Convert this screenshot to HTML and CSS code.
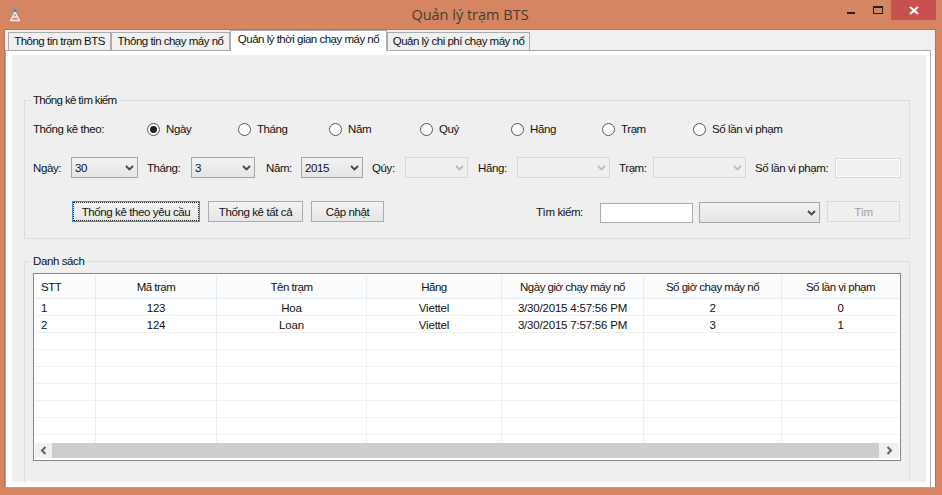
FILE: index.html
```html
<!DOCTYPE html>
<html lang="vi">
<head>
    <meta charset="UTF-8">
    <title>Quản lý trạm BTS</title>
    <link rel="stylesheet" href="styles.css">
</head>
<body>
    <div class="titlebar">
        <svg class="app-icon" width="14" height="16" viewBox="0 0 14 16">
            <circle cx="7" cy="5" r="3.5" fill="none" stroke="#8f97ad" stroke-width="1.4"/>
            <circle cx="7" cy="5" r="1.5" fill="#6d7690"/>
            <path d="M7 6 L3 14 M7 6 L11 14 M4.5 11 H9.5 M2 14.5 H12" fill="none" stroke="#eee" stroke-width="1.4"/>
        </svg>
        <div class="title">Quản lý trạm BTS</div>
        <div class="win-buttons">
            <span class="win-min"></span>
            <span class="win-max"></span>
            <span class="win-close">
                <svg width="10" height="9" viewBox="0 0 10 9"><path d="M1 1 L9 8 M9 1 L1 8" stroke="#fff" stroke-width="2"/></svg>
            </span>
        </div>
    </div>

    <div class="form">
        <div class="tabs">
            <div class="tab tab-1">Thông tin trạm BTS</div>
            <div class="tab tab-2">Thông tin chạy máy nổ</div>
            <div class="tab tab-3 active">Quản lý thời gian chạy máy nổ</div>
            <div class="tab tab-4">Quản lý chi phí chạy máy nổ</div>
        </div>
        <div class="tab-page">
            <div class="panel">
                <fieldset class="group group-search">
                    <legend>Thống kê tìm kiếm</legend>
                    <div class="radio-row">
                        <span class="radio-title">Thống kê theo:</span>
                        <label class="radio"><span class="dot checked"></span>Ngày</label>
                        <label class="radio"><span class="dot"></span>Tháng</label>
                        <label class="radio"><span class="dot"></span>Năm</label>
                        <label class="radio"><span class="dot"></span>Quý</label>
                        <label class="radio"><span class="dot"></span>Hãng</label>
                        <label class="radio"><span class="dot"></span>Trạm</label>
                        <label class="radio"><span class="dot"></span>Số lần vi phạm</label>
                    </div>

                    <div class="field-row">
                        <div class="field f-ngay"><span>Ngày:</span>
                            <div class="combo w67">30<svg class="chev" width="9" height="6" viewBox="0 0 9 6"><path d="M1 1 L4.5 4.5 L8 1" /></svg></div>
                        </div>
                        <div class="field f-thang"><span>Tháng:</span>
                            <div class="combo w64">3<svg class="chev" width="9" height="6" viewBox="0 0 9 6"><path d="M1 1 L4.5 4.5 L8 1" /></svg></div>
                        </div>
                        <div class="field f-nam"><span>Năm:</span>
                            <div class="combo w62">2015<svg class="chev" width="9" height="6" viewBox="0 0 9 6"><path d="M1 1 L4.5 4.5 L8 1" /></svg></div>
                        </div>
                        <div class="field f-quy"><span>Qúy:</span>
                            <div class="combo off w63"><svg class="chev" width="9" height="6" viewBox="0 0 9 6"><path d="M1 1 L4.5 4.5 L8 1" /></svg></div>
                        </div>
                        <div class="field f-hang"><span>Hãng:</span>
                            <div class="combo off w93"><svg class="chev" width="9" height="6" viewBox="0 0 9 6"><path d="M1 1 L4.5 4.5 L8 1" /></svg></div>
                        </div>
                        <div class="field f-tram"><span>Trạm:</span>
                            <div class="combo off w93"><svg class="chev" width="9" height="6" viewBox="0 0 9 6"><path d="M1 1 L4.5 4.5 L8 1" /></svg></div>
                        </div>
                        <div class="field f-solan"><span>Số lần vi phạm:</span>
                            <div class="textbox off"></div>
                        </div>
                    </div>

                    <div class="action-row">
                        <button class="btn btn-focus">Thống kê theo yêu cầu</button>
                        <button class="btn btn-all">Thống kê tất cả</button>
                        <button class="btn btn-update">Cập nhật</button>
                        <span class="search-label">Tìm kiếm:</span>
                        <div class="textbox search-box"></div>
                        <div class="combo search-combo"><svg class="chev" width="9" height="6" viewBox="0 0 9 6"><path d="M1 1 L4.5 4.5 L8 1" /></svg></div>
                        <button class="btn btn-find" disabled>Tìm</button>
                    </div>
                </fieldset>

                <fieldset class="group group-list">
                    <legend>Danh sách</legend>
                    <div class="grid">
                        <div class="grid-body">
                            <table>
                                <colgroup>
                                    <col class="c1"><col class="c2"><col class="c3"><col class="c4"><col class="c5"><col class="c6"><col class="c7">
                                </colgroup>
                                <thead>
                                    <tr>
                                        <th class="left">STT</th>
                                        <th>Mã trạm</th>
                                        <th>Tên trạm</th>
                                        <th>Hãng</th>
                                        <th>Ngày giờ chạy máy nổ</th>
                                        <th>Số giờ chạy máy nổ</th>
                                        <th>Số lần vi phạm</th>
                                    </tr>
                                </thead>
                                <tbody>
                                    <tr><td class="left">1</td><td>123</td><td>Hoa</td><td>Viettel</td><td>3/30/2015 4:57:56 PM</td><td>2</td><td>0</td></tr>
                                    <tr><td class="left">2</td><td>124</td><td>Loan</td><td>Viettel</td><td>3/30/2015 7:57:56 PM</td><td>3</td><td>1</td></tr>
                                    <tr><td></td><td></td><td></td><td></td><td></td><td></td><td></td></tr>
                                    <tr><td></td><td></td><td></td><td></td><td></td><td></td><td></td></tr>
                                    <tr><td></td><td></td><td></td><td></td><td></td><td></td><td></td></tr>
                                    <tr><td></td><td></td><td></td><td></td><td></td><td></td><td></td></tr>
                                    <tr><td></td><td></td><td></td><td></td><td></td><td></td><td></td></tr>
                                    <tr><td></td><td></td><td></td><td></td><td></td><td></td><td></td></tr>
                                    <tr><td></td><td></td><td></td><td></td><td></td><td></td><td></td></tr>
                                </tbody>
                            </table>
                        </div>
                        <div class="hscroll">
                            <span class="arrow"><svg width="7" height="9" viewBox="0 0 7 9"><path d="M5.5 1 L2 4.5 L5.5 8" /></svg></span>
                            <span class="thumb"></span>
                            <span class="arrow arrow-right"><svg width="7" height="9" viewBox="0 0 7 9"><path d="M1.5 1 L5 4.5 L1.5 8" /></svg></span>
                        </div>
                    </div>
                </fieldset>
            </div>
        </div>
    </div>
</body>
</html>
```

FILE: styles.css
```css
* { box-sizing: border-box; }

html, body {
    margin: 0;
    height: 495px;
    overflow: hidden;
}
body {
    background: #d58562;
    color: #111;
    font-family: "Liberation Sans", Arial, sans-serif;
    font-size: 11.5px;
    letter-spacing: -0.4px;
    padding: 0 6px 7px 4px;
    display: flex;
    flex-direction: column;
}

/* title bar */
.titlebar {
    height: 29px;
    flex: none;
    display: grid;
    grid-template-columns: 1fr auto 1fr;
}
.app-icon { margin: 6px 0 0 4px; }
.title {
    font-family: "Open Sans", sans-serif;
    font-size: 14.5px;
    letter-spacing: 0;
    color: #4a3a32;
    padding-top: 5px;
}
.win-buttons {
    display: flex;
    justify-content: flex-end;
    align-items: flex-start;
}
.win-min {
    width: 8px;
    height: 2px;
    margin: 12px 18px 0 0;
    background: #222;
}
.win-max {
    width: 10px;
    height: 8px;
    margin: 6px 8px 0 0;
    border: 1px solid #222;
    border-top-width: 2px;
}
.win-close {
    width: 45px;
    height: 20px;
    background: #c75050;
    display: flex;
    align-items: center;
    justify-content: center;
}

/* window body */
.form {
    flex: 1;
    border: 1px solid #b5735a;
    border-bottom: 1px solid #a8a8a8;
    padding: 0 4px 0 0;
    background: linear-gradient(#f0f0f0 20px, #fff 20px);
    display: flex;
    flex-direction: column;
    min-height: 0;
}

.tabs {
    height: 20px;
    flex: none;
    display: flex;
    align-items: flex-end;
    padding-left: 3px;
    position: relative;
    z-index: 1;
}
.tab {
    height: 19px;
    background: #f0f0f0;
    border: 1px solid #acacac;
    line-height: 17px;
    letter-spacing: -0.5px;
    text-align: center;
    white-space: nowrap;
    margin-bottom: -1px;
}
.tab-1 { width: 103px; }
.tab-2 { width: 119px; }
.tab-3 { width: 157px; }
.tab-4 { width: 143px; }
.tab.active {
    height: 21px;
    background: #fff;
    border-bottom: 0;
    line-height: 17px;
}

.tab-page {
    flex: 1;
    min-height: 0;
    background: #fff;
    border: 1px solid #acacac;
    border-bottom: 0;
    padding: 4px 4px 5px 6px;
}
.panel {
    height: 100%;
    background: #efefef;
    padding: 38px 16px 0 12px;
    overflow: hidden;
}

/* group boxes */
.group {
    margin: 0;
    min-width: 0;
    border: 1px solid #dddddd;
    padding: 0;
}
.group legend {
    margin-left: -2px;
    padding: 0 2px;
    line-height: 14px;
}
.group-search legend { letter-spacing: -0.65px; }
.group-search {
    height: 146px;
    padding: 0 8px;
}
.group-list {
    margin-top: 15px;
    height: 300px;
    padding: 5px 8px 0;
}

/* radios */
.radio-row {
    display: flex;
    align-items: center;
    height: 18px;
    margin-top: 13px;
}
.radio-title { width: 114px; }
.radio {
    width: 91px;
    display: flex;
    align-items: center;
    gap: 6px;
    white-space: nowrap;
}
.dot {
    flex: none;
    width: 13px;
    height: 13px;
    border-radius: 50%;
    border: 1px solid #555;
    background: #fff;
    display: flex;
    align-items: center;
    justify-content: center;
}
.dot.checked::after {
    content: "";
    width: 7px;
    height: 7px;
    border-radius: 50%;
    background: #222;
}

/* combos and labels */
.field-row {
    display: flex;
    margin-top: 19px;
}
.field {
    display: flex;
    align-items: center;
    justify-content: space-between;
    margin-right: 9px;
    white-space: nowrap;
}
.f-ngay { width: 105px; }
.f-thang { width: 108px; margin-right: 11px; }
.f-nam { width: 97px; }
.f-quy { width: 96px; margin-right: 10px; }
.f-hang { width: 132px; }
.f-tram { width: 127px; }
.f-solan { width: 146px; margin-right: 0; }

.combo {
    height: 21px;
    border: 1px solid #a6a6a6;
    background: linear-gradient(#f2f2f2, #e5e5e5);
    display: flex;
    align-items: center;
    justify-content: space-between;
    padding: 0 3px 0 3px;
}
.w62 { width: 62px; }
.w63 { width: 63px; }
.w64 { width: 64px; }
.w67 { width: 67px; }
.w93 { width: 93px; }
.chev {
    margin-left: auto;
    fill: none;
    stroke: #444;
    stroke-width: 1.8;
}
.combo.off {
    background: #efefef;
    border-color: #d9d9d9;
}
.combo.off .chev { stroke: #bcbcbc; }

.textbox {
    background: #fff;
    border: 1px solid #abadb3;
}
.textbox.off {
    width: 66px;
    height: 20px;
    background: #f0f0f0;
    border-color: #d9d9d9;
    box-shadow: inset 0 0 0 1px #fafafa;
}

/* bottom row of the search group */
.action-row {
    display: flex;
    align-items: center;
    height: 23px;
    margin-top: 22px;
    padding-left: 39px;
}
.btn {
    height: 21px;
    padding: 0;
    margin: 0;
    font: inherit;
    letter-spacing: inherit;
    color: #111;
    background: linear-gradient(#f3f3f3, #e6e6e6);
    border: 1px solid #acacac;
}
.btn-focus {
    width: 128px;
    border-color: #3c8fdc;
    outline: 1px dotted #222;
    outline-offset: -2px;
}
.btn-all { width: 95px; margin-left: 8px; }
.btn-update { width: 73px; margin-left: 8px; }
.search-label { margin-left: 152px; width: 64px; }
.search-box { width: 93px; height: 20px; margin-top: 2px; }
.search-combo { width: 121px; margin: 2px 0 0 6px; }
.btn-find {
    width: 73px;
    margin-left: 7px;
    background: #efefef;
    border-color: #d9d9d9;
    color: #a0a0a0;
}

/* data grid */
.grid {
    height: 188px;
    width: 868px;
    border: 1px solid #828790;
    background: #fff;
    padding: 1px;
    display: flex;
    flex-direction: column;
}
.grid-body {
    flex: 1;
    min-height: 0;
    overflow: hidden;
}
table {
    border-collapse: separate;
    border-spacing: 0;
    table-layout: fixed;
    width: 864px;
}
.c1 { width: 61px; }
.c2 { width: 121px; }
.c3 { width: 150px; }
.c4 { width: 135px; }
.c5 { width: 142px; }
.c6 { width: 138px; }
.c7 { width: 117px; }
th, td {
    padding: 0;
    text-align: center;
    font-weight: normal;
    white-space: nowrap;
}
th {
    height: 24px;
    background: #fcfcfc;
    letter-spacing: -0.5px;
    border-right: 1px solid #e6eefa;
    border-bottom: 1px solid #e3edf9;
}
td {
    height: 17px;
    padding-top: 1px;
    letter-spacing: -0.2px;
    border-right: 1px solid #f0f0f0;
    border-bottom: 1px solid #f0f0f0;
}
th.left, td.left {
    text-align: left;
    padding-left: 6px;
}
th:last-child, td:last-child { border-right: 0; }

.hscroll {
    flex: none;
    height: 15px;
    display: flex;
    margin-bottom: 1px;
    background: #f0f0f0;
}
.arrow {
    width: 17px;
    display: flex;
    align-items: center;
    justify-content: center;
}
.arrow svg {
    fill: none;
    stroke: #606060;
    stroke-width: 2;
}
.arrow-right { width: 20px; }
.thumb {
    flex: 1;
    background: #cdcdcd;
}
```
